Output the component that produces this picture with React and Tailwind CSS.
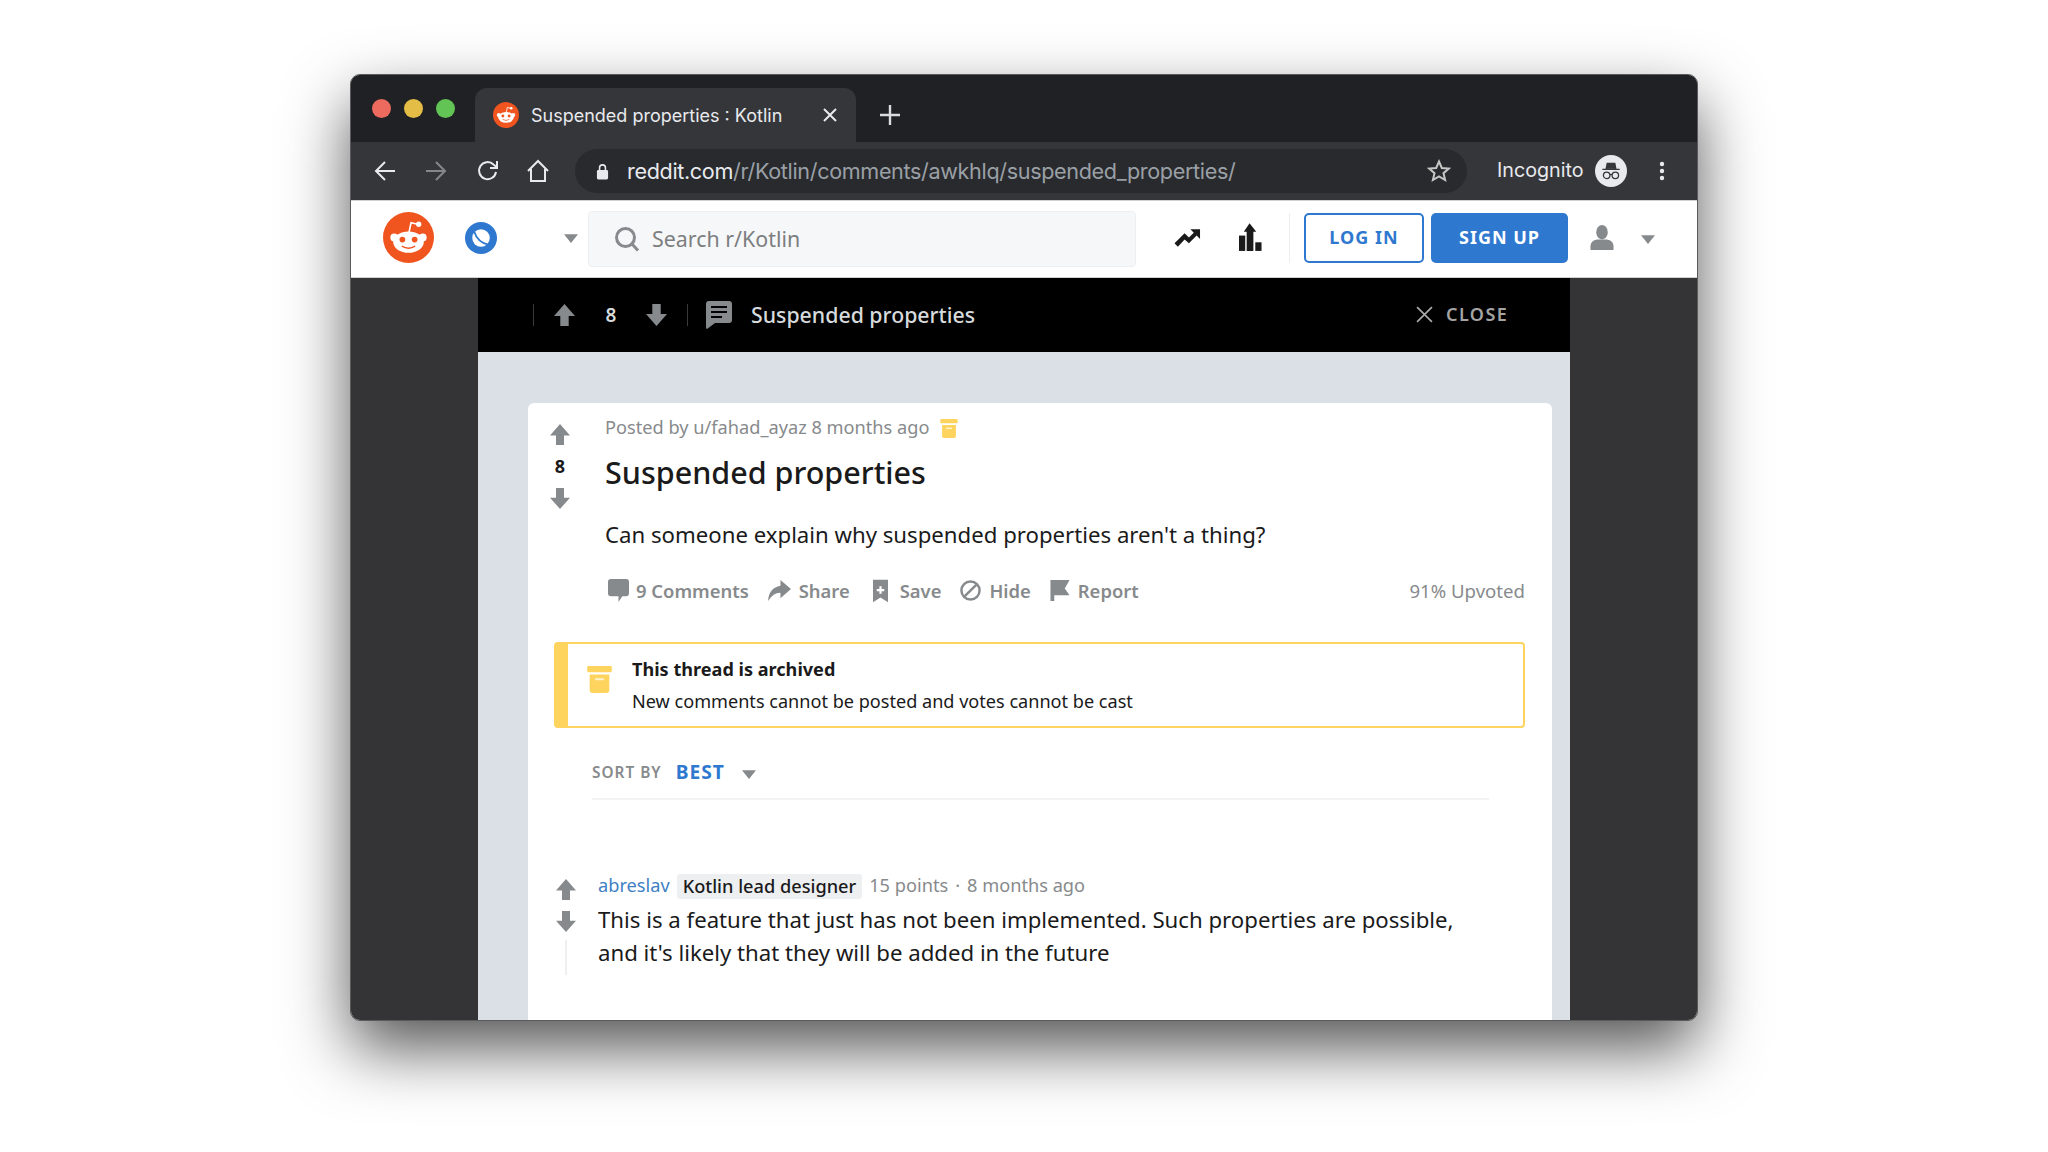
const Up = ({ className }) => (
  <svg viewBox="0 0 20 24" preserveAspectRatio="none" className={className} fill="currentColor"><path d="M10 0 L20 13 H14 V24 H6 V13 H0 Z" /></svg>
);
const Down = ({ className }) => (
  <svg viewBox="0 0 20 24" preserveAspectRatio="none" className={className} fill="currentColor"><path d="M10 24 L20 11 H14 V0 H6 V11 H0 Z" /></svg>
);
const Caret = ({ className }) => (
  <svg viewBox="0 0 16 10" className={className} fill="currentColor"><path d="M0 0 H16 L8 10 Z" /></svg>
);
const Snoo = ({ className }) => (
  <svg viewBox="0 0 50 50" className={className}>
    <circle cx="25" cy="25" r="25" fill="#f0541f" />
    <path d="M25.5 20 L27.5 10.5 L34 12" stroke="#fff" strokeWidth="1.6" fill="none" />
    <circle cx="35" cy="12" r="2.6" fill="#fff" />
    <circle cx="11" cy="25" r="3.8" fill="#fff" />
    <circle cx="39" cy="25" r="3.8" fill="#fff" />
    <ellipse cx="25" cy="29.5" rx="15" ry="10.5" fill="#fff" />
    <circle cx="19" cy="27" r="2.8" fill="#f0541f" />
    <circle cx="31" cy="27" r="2.8" fill="#f0541f" />
    <path d="M18.5 33.5 Q25 37.5 31.5 33.5" stroke="#f0541f" strokeWidth="1.4" fill="none" />
  </svg>
);
const Archive = ({ className }) => (
  <svg viewBox="0 0 20 22" className={className} fill="#ffd45e">
    <rect x="0" y="0" width="20" height="5" rx="1" />
    <path d="M2 7 H18 V20 Q18 22 16 22 H4 Q2 22 2 20 Z" />
    <rect x="6.5" y="10" width="7" height="1.6" fill="#fff" opacity="0.7" />
  </svg>
);

function BrowserTop() {
  return (
    <>
      <div className="h-[67px] bg-[#202124] flex items-end relative shrink-0">
        <div className="flex gap-[13px] ml-[21px] mb-[24px] w-[103px]">
          <span className="w-[19px] h-[19px] rounded-full bg-[#ec6a5e]" />
          <span className="w-[19px] h-[19px] rounded-full bg-[#e3bd45]" />
          <span className="w-[19px] h-[19px] rounded-full bg-[#61c454]" />
        </div>
        <div className="w-[381px] h-[54px] bg-[#35363a] rounded-t-[12px] flex items-center pl-[18px] text-[#e8eaed]">
          <Snoo className="w-[26px] h-[26px] shrink-0" />
          <span className="ml-[12px] text-[18px] [font-family:Inter,sans-serif] w-[260px] whitespace-nowrap">Suspended properties : Kotlin</span>
          <svg viewBox="0 0 14 14" className="w-[14px] h-[14px] ml-[32px]" stroke="#e8eaed" strokeWidth="2"><path d="M1 1 L13 13 M13 1 L1 13" /></svg>
        </div>
        <svg viewBox="0 0 20 20" className="w-[20px] h-[20px] ml-[24px] mb-[17px]" stroke="#dadce0" strokeWidth="2.4"><path d="M10 0 V20 M0 10 H20" /></svg>
      </div>
      <div className="h-[58px] bg-[#35363a] flex items-center shrink-0 [font-family:Inter,sans-serif]">
        <div className="w-[224px] flex items-center text-[#e8eaed] pl-[23px] gap-[29px] shrink-0">
          <svg viewBox="0 0 22 22" className="w-[22px] h-[22px]" fill="none" stroke="#e8eaed" strokeWidth="2"><path d="M21 11 H2 M11 2 L2 11 L11 20" /></svg>
          <svg viewBox="0 0 22 22" className="w-[22px] h-[22px]" fill="none" stroke="#85878b" strokeWidth="2"><path d="M1 11 H20 M11 2 L20 11 L11 20" /></svg>
          <svg viewBox="0 0 24 24" className="w-[24px] h-[24px]" fill="none" stroke="#e8eaed" strokeWidth="2"><path d="M20 13 A8.5 8.5 0 1 1 17.5 5.5 L20.5 8" /><path d="M21 2 V9 H14" /></svg>
          <svg viewBox="0 0 24 24" className="w-[24px] h-[24px] -ml-[3px]" fill="none" stroke="#e8eaed" strokeWidth="2"><path d="M2 12 L12 2 L22 12 M5 10 V22 H19 V10" /></svg>
        </div>
        <div className="w-[892px] h-[44px] rounded-full bg-[#292a2d] flex items-center shrink-0">
          <svg viewBox="0 0 14 18" className="w-[13px] h-[17px] ml-[21px]" fill="#e8eaed"><path d="M3 8 V5 A4 4 0 0 1 11 5 V8 H9.3 V5 A2.3 2.3 0 0 0 4.7 5 V8 Z" /><rect x="1" y="7.5" width="12" height="10" rx="1.5" /></svg>
          <span className="ml-[18px] text-[21.6px] tracking-[-0.35px] text-[#e8eaed] whitespace-nowrap">reddit.com<span className="text-[#9aa0a6]">/r/Kotlin/comments/awkhlq/suspended_properties/</span></span>
          <svg viewBox="0 0 24 24" className="w-[24px] h-[24px] ml-auto mr-[16px]" fill="none" stroke="#c4c7c5" strokeWidth="2"><path d="M12 2.5 L14.8 9 L21.8 9.6 L16.5 14.2 L18.1 21 L12 17.4 L5.9 21 L7.5 14.2 L2.2 9.6 L9.2 9 Z" /></svg>
        </div>
        <span className="ml-[30px] text-[19.7px] text-[#e8eaed] w-[90px] whitespace-nowrap">Incognito</span>
        <div className="ml-[8px] w-[32px] h-[32px] rounded-full bg-[#e8eaed] flex items-center justify-center">
          <svg viewBox="0 0 24 24" className="w-[26px] h-[26px]" fill="none" stroke="#35363a" strokeWidth="1.2">
            <path d="M4 10.5 H20 M7.5 10 L8.5 5 H15.5 L16.5 10 Z" fill="#35363a" />
            <circle cx="8" cy="16" r="3" /><circle cx="16" cy="16" r="3" /><path d="M11 15.5 Q12 14.8 13 15.5" />
          </svg>
        </div>
        <svg viewBox="0 0 6 20" className="w-[6px] h-[20px] ml-[32px]" fill="#e8eaed"><circle cx="3" cy="3" r="2.2" /><circle cx="3" cy="10" r="2.2" /><circle cx="3" cy="17" r="2.2" /></svg>
      </div>
    </>
  );
}

function RedditHeader() {
  return (
    <div className="h-[78px] bg-white border-y border-[#d0d0d0] flex items-center shrink-0 pb-[3px] [font-family:'Noto_Sans',sans-serif]">
      <Snoo className="w-[51px] h-[51px] ml-[32px] shrink-0" />
      <div className="ml-[31px] w-[32px] h-[32px] rounded-full bg-[#2f78cf] flex items-center justify-center shrink-0">
        <svg viewBox="0 0 24 24" className="w-[28px] h-[28px]">
          <circle cx="12" cy="12" r="7.5" fill="#fff" />
          <path d="M6 6 Q9 16 19 18" stroke="#2f78cf" strokeWidth="1.5" fill="none" />
        </svg>
      </div>
      <Caret className="w-[14px] h-[9px] ml-[67px] mt-[2px] text-[#878a8c] shrink-0" />
      <div className="ml-[10px] mt-[3px] w-[548px] h-[56px] bg-[#f6f7f8] border border-[#edeff1] rounded-[4px] flex items-center shrink-0">
        <svg viewBox="0 0 26 26" className="w-[26px] h-[26px] ml-[25px]" fill="none" stroke="#878a8c" strokeWidth="3"><circle cx="11.5" cy="11.5" r="9" /><path d="M18 18 L24 24.5" /></svg>
        <span className="ml-[12px] text-[21.4px] text-[#7c7e80] whitespace-nowrap">Search r/Kotlin</span>
      </div>
      <svg viewBox="0 0 28 20" className="w-[27px] h-[20px] ml-[38px] shrink-0" fill="#1a1a1b"><path d="M17 1 H27 V11 L23.5 7.5 L15.5 15.5 L11 11.5 L4 19 L0.5 15.5 L11 5 L15.5 9.5 L20.5 4.5 Z" /></svg>
      <svg viewBox="0 0 24 30" className="w-[23px] h-[29px] ml-[38px] shrink-0" fill="#1a1a1b"><path d="M11 0 L18 9 H15 V29 H8 V9 H5 Z" /><rect x="0" y="13" width="6.5" height="16" /><rect x="17" y="20" width="6.5" height="9" /></svg>
      <span className="ml-[27px] w-px h-[50px] bg-[#edeff1] shrink-0" />
      <div className="ml-[14px] w-[120px] h-[50px] rounded-[5px] border-2 border-[#2f78cf] text-[#2f78cf] flex items-center justify-center text-[18px] font-bold tracking-[1px] shrink-0">LOG IN</div>
      <div className="ml-[7px] w-[137px] h-[50px] rounded-[5px] bg-[#2f78cf] text-white flex items-center justify-center text-[18px] font-bold tracking-[1px] shrink-0">SIGN UP</div>
      <svg viewBox="0 0 24 26" className="w-[24px] h-[25px] ml-[22px] shrink-0" fill="#878a8c"><ellipse cx="12" cy="7.5" rx="6" ry="7.5" /><path d="M0 26 V22 Q0 16 7 15 H17 Q24 16 24 22 V26 Z" /></svg>
      <Caret className="w-[14px] h-[9px] ml-[27px] mt-[4px] text-[#878a8c] shrink-0" />
    </div>
  );
}

function BlackBar() {
  return (
    <div className="h-[74px] bg-black text-[#d7dadc] flex items-center shrink-0">
      <span className="ml-[55px] w-px h-[22px] bg-[#3a3a3a]" />
      <Up className="w-[21px] h-[22px] ml-[20px] text-[#878a8c]" />
      <span className="w-[24px] ml-[24px] text-[19px] font-semibold text-center">8</span>
      <Down className="w-[21px] h-[22px] ml-[23px] text-[#878a8c]" />
      <span className="ml-[20px] w-px h-[22px] bg-[#3a3a3a]" />
      <svg viewBox="0 0 26 28" className="w-[26px] h-[28px] ml-[18px]" fill="#878a8c">
        <path d="M3 0 H23 Q26 0 26 3 V19 Q26 22 23 22 H9 L1 28 Q0 28 0 26 V3 Q0 0 3 0 Z" />
        <path d="M5 6 H21 M5 11 H21 M5 16 H16" stroke="#000" strokeWidth="2" />
      </svg>
      <span className="ml-[19px] text-[21.3px] font-medium -mt-[1px]">Suspended properties</span>
      <svg viewBox="0 0 16 16" className="w-[17px] h-[17px] ml-[441px] -mt-[1px]" stroke="#a9a9a9" strokeWidth="1.6"><path d="M1 1 L15 15 M15 1 L1 15" /></svg>
      <span className="ml-[13px] text-[18px] font-semibold tracking-[1.4px] text-[#a5a4a4] -mt-[2px]">CLOSE</span>
    </div>
  );
}

const Action = ({ icon, label, gap, className = "" }) => (
  <div className={`flex items-center text-[#878a8c] font-semibold text-[18.4px] whitespace-nowrap ${className}`}>{icon}<span className={gap}>{label}</span></div>
);

function Card() {
  return (
    <div className="ml-[50px] mr-[18px] mt-[51px] h-[617px] bg-white rounded-t-[6px] flex flex-col text-[#1a1a1b]">
      <div className="flex pl-[21px] pt-[21px]">
        <div className="w-[22px] flex flex-col items-center text-[#878a8c] shrink-0">
          <Up className="w-[20px] h-[21px]" />
          <span className="text-[18px] font-bold text-[#1a1a1b] leading-[22px] mt-[10px] mb-[11px]">8</span>
          <Down className="w-[20px] h-[21px]" />
        </div>
        <div className="ml-[34px] flex-1 -mt-[9px]">
          <div className="flex items-center text-[18.2px] text-[#878a8c] h-[26px]">
            Posted by u/fahad_ayaz 8 months ago
            <Archive className="w-[18px] h-[19px] ml-[11px]" />
          </div>
          <div className="mt-[10px] text-[30.5px] font-medium leading-[43px]">Suspended properties</div>
          <div className="mt-[24px] text-[22.2px] leading-[34px]">Can someone explain why suspended properties aren't a thing?</div>
          <div className="mt-[25px] flex items-center h-[28px] pl-[3px] pr-[27px]">
            <div className="flex items-center gap-[19px]">
              <Action gap="ml-[7px]" label="9 Comments" icon={<svg viewBox="0 0 22 24" className="w-[21px] h-[23px]" fill="#878a8c"><path d="M3 0 H19 Q22 0 22 3 V15 Q22 18 19 18 H15 L11 24 V18 H3 Q0 18 0 15 V3 Q0 0 3 0 Z" /></svg>} />
              <Action gap="ml-[8px]" label="Share" icon={<svg viewBox="0 0 24 22" className="w-[23px] h-[21px]" fill="#878a8c"><path d="M13 0 L24 9.5 L13 19 V13.5 Q6 13 0 22 Q1 8 13 6 Z" /></svg>} />
              <Action gap="ml-[12px]" className="ml-[4px]" label="Save" icon={<svg viewBox="0 0 16 24" className="w-[15px] h-[24px]" fill="#878a8c"><path d="M0 0 H16 V24 L8 19 L0 24 Z" /><path d="M8 7 V15 M4 11 H12" stroke="#fff" strokeWidth="2.4" /></svg>} />
              <Action gap="ml-[8px]" label="Hide" icon={<svg viewBox="0 0 22 22" className="w-[21px] h-[21px]" fill="none" stroke="#878a8c" strokeWidth="2.6"><circle cx="11" cy="11" r="9.5" /><path d="M5 17 L17 5" /></svg>} />
              <Action gap="ml-[8px]" label="Report" icon={<svg viewBox="0 0 20 22" className="w-[20px] h-[21px]" fill="#878a8c"><path d="M0 0 H20 L15 9 L20 16 H4 V22 H0 Z" /></svg>} />
            </div>
            <span className="ml-auto text-[18.6px] text-[#878a8c]">91% Upvoted</span>
          </div>
        </div>
      </div>
      <div className="ml-[26px] mr-[27px] mt-[37px] h-[86px] border-2 border-l-[14px] border-[#ffd45e] rounded-[4px] flex shrink-0">
        <Archive className="w-[25px] h-[27px] ml-[19px] mt-[22px]" />
        <div className="ml-[20px] mt-[9px] text-[18.1px] leading-[32px]">
          <div className="font-bold">This thread is archived</div>
          <div>New comments cannot be posted and votes cannot be cast</div>
        </div>
      </div>
      <div className="ml-[64px] mr-[63px] h-[72px] pt-[19px] border-b-2 border-[#f2f3f4] flex items-center shrink-0">
        <span className="text-[15.4px] font-semibold tracking-[1px] text-[#878a8c]">SORT BY</span>
        <span className="ml-[14px] text-[19.2px] font-bold tracking-[1px] text-[#2f78cf]">BEST</span>
        <Caret className="w-[14px] h-[9px] ml-[17px] mt-[3px] text-[#878a8c]" />
      </div>
      <div className="flex pl-[20px] pt-[79px]">
        <div className="w-[36px] shrink-0 flex flex-col items-center text-[#878a8c]">
          <Up className="w-[20px] h-[21px]" />
          <Down className="w-[20px] h-[21px] mt-[11px]" />
          <span className="w-[2px] h-[35px] bg-[#edeff1] mt-[8px]" />
        </div>
        <div className="ml-[14px] flex-1 pr-[90px] -mt-[6px]">
          <div className="flex items-center text-[18.2px] h-[26px]">
            <span className="text-[#3f80c4]">abreslav</span>
            <span className="ml-[7px] bg-[#edeff1] rounded-[3px] px-[6px] text-[#1a1a1b] font-medium leading-[25px]">Kotlin lead designer</span>
            <span className="ml-[7px] text-[#878a8c]">15 points<span className="mx-[7px]">·</span>8 months ago</span>
          </div>
          <div className="mt-[4px] text-[22.2px] leading-[33px]">This is a feature that just has not been implemented. Such properties are possible, and it's likely that they will be added in the future</div>
        </div>
      </div>
    </div>
  );
}

export default function App() {
  return (
    <div className="w-[2048px] h-[1152px] bg-white overflow-hidden pt-[75px] pl-[351px]">
      <div className="w-[1346px] h-[945px] rounded-[9px] overflow-hidden flex flex-col bg-[#343335] shadow-[0_28px_65px_rgba(0,0,0,0.68)] outline outline-[1px] outline-[#5a5a5c]">
        <BrowserTop />
        <RedditHeader />
        <div className="w-[1092px] ml-[127px] flex-1 min-h-0 bg-[#dae0e6] flex flex-col [font-family:'Noto_Sans',sans-serif]">
          <BlackBar />
          <Card />
        </div>
      </div>
    </div>
  );
}
